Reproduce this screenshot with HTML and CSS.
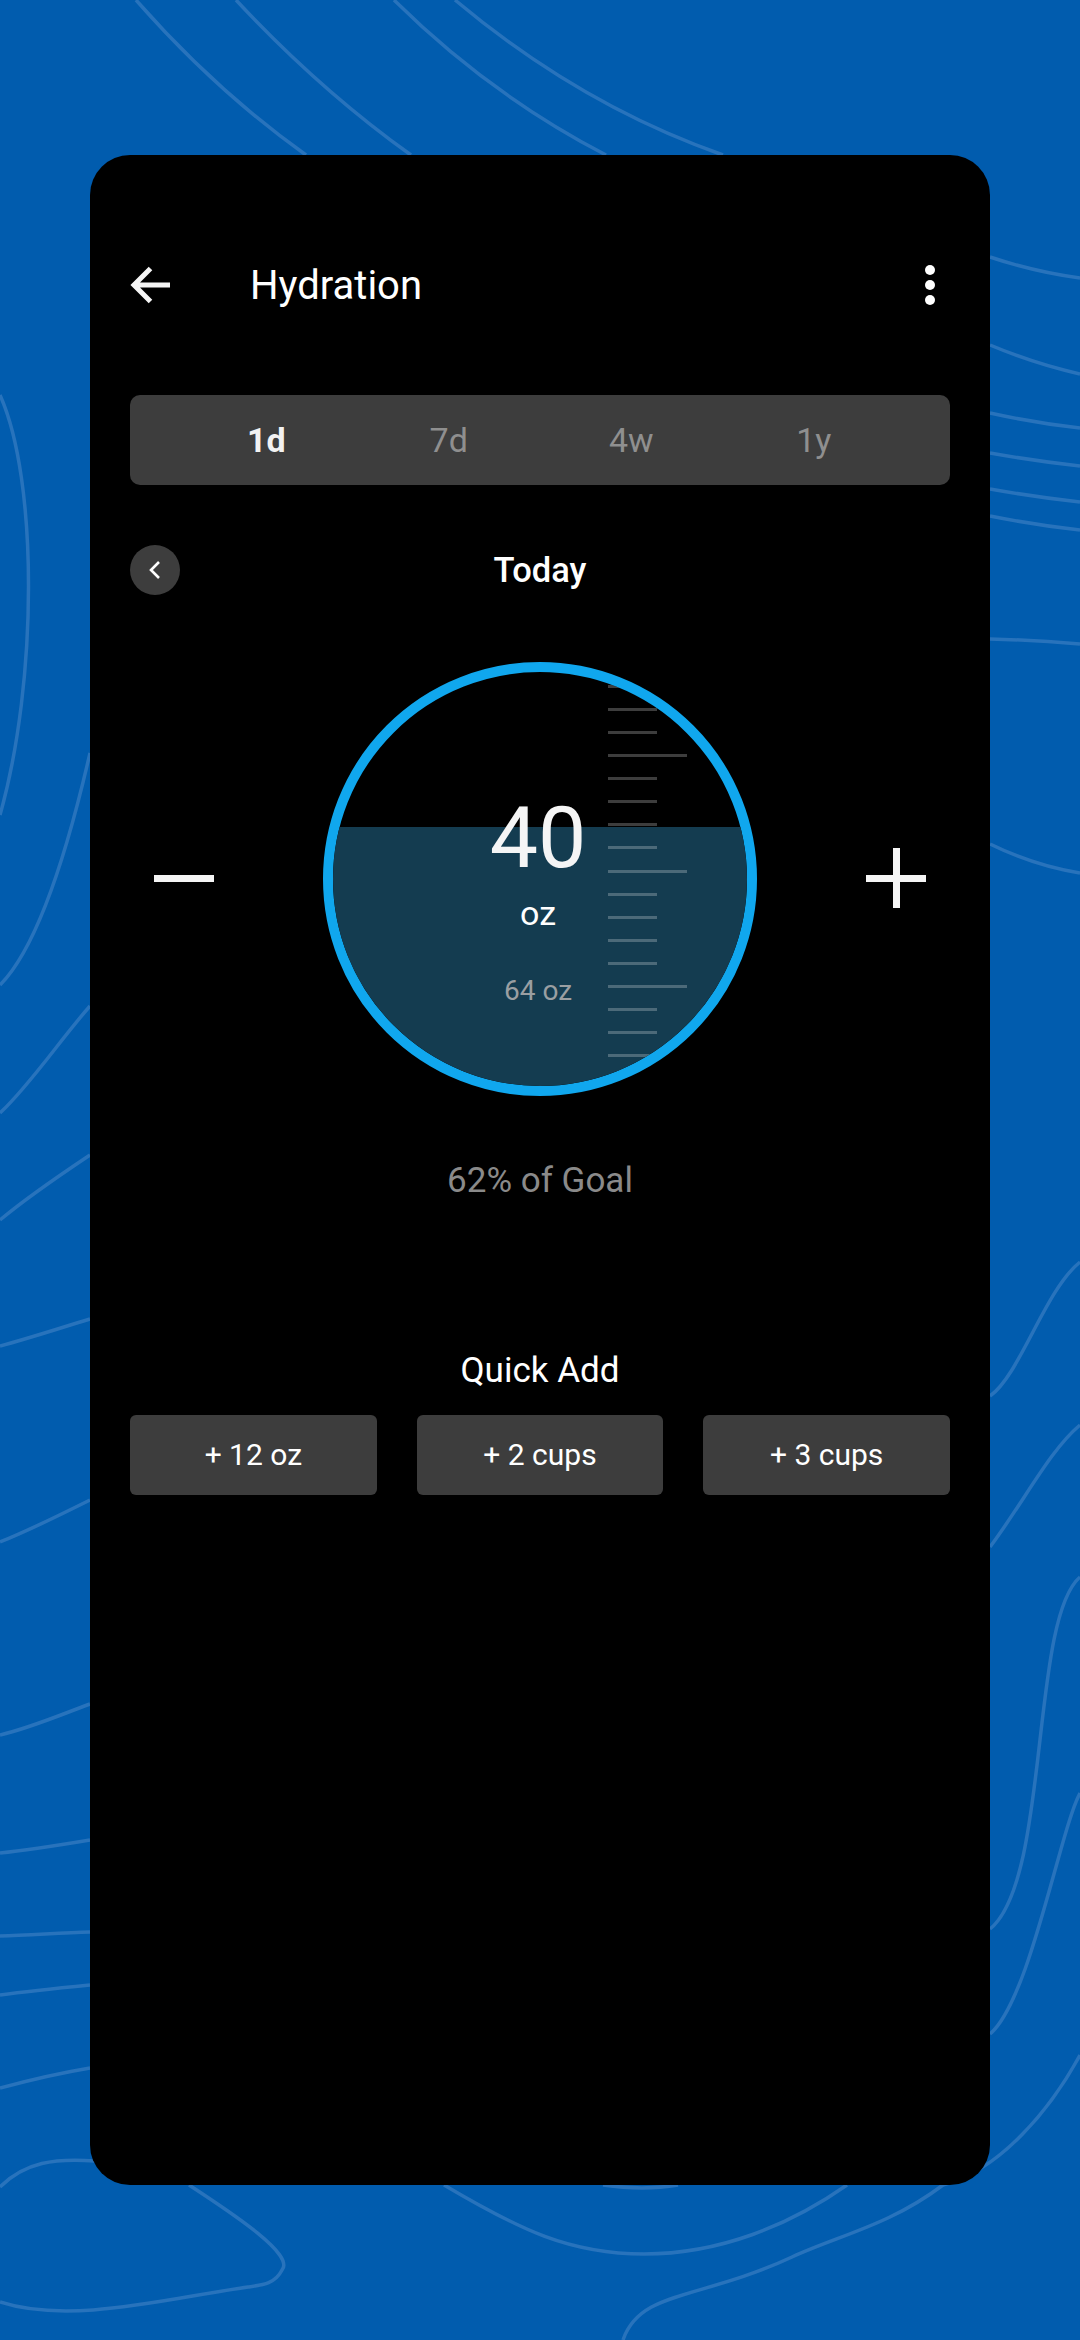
FILE: index.html
```html
<!DOCTYPE html>
<html lang="en">

<head>
    <meta charset="UTF-8">
    <meta name="viewport" content="width=device-width, initial-scale=1.0">
    <title>Hydration</title>
    <link rel="stylesheet" href="styles.css">
</head>

<body>
    <!-- Contour lines behind the card -->
    <svg class="contours" viewBox="0 0 1080 2340" fill="none">
        <path d="M136 0Q215 90 306 155" />
        <path d="M236 0Q320 90 411 155" />
        <path d="M394 0Q490 95 606 155" />
        <path d="M455 0Q580 105 723 155" />
        <path d="M990 257Q1035 272 1080 278" />
        <path d="M990 345Q1035 364 1080 374" />
        <path d="M990 413Q1035 423 1080 428" />
        <path d="M990 453Q1035 461 1080 466" />
        <path d="M990 489Q1035 497 1080 502" />
        <path d="M990 516Q1035 525 1080 530" />
        <path d="M990 639Q1035 640 1080 644" />
        <path d="M990 844Q1035 866 1080 873" />
        <path d="M990 1396C1020 1375 1045 1290 1080 1262" />
        <path d="M990 1547C1025 1500 1050 1450 1080 1425" />
        <path d="M990 1929C1050 1880 1030 1620 1080 1577" />
        <path d="M990 2034C1030 2000 1060 1830 1080 1793" />
        <path d="M1080 2055C1050 2110 1000 2170 943 2185C890 2225 840 2235 792 2257C700 2300 640 2290 623 2340" />
        <path d="M0 395C38 480 38 680 0 815" />
        <path d="M0 985C40 945 70 840 90 753" />
        <path d="M0 1113C30 1085 60 1040 90 1006" />
        <path d="M0 1220C30 1195 60 1175 90 1155" />
        <path d="M0 1346C30 1338 60 1328 90 1319" />
        <path d="M0 1542C30 1530 60 1515 90 1500" />
        <path d="M0 1735C30 1728 60 1715 90 1704" />
        <path d="M0 1853C30 1850 60 1845 90 1840" />
        <path d="M0 1936C30 1935 60 1933 90 1932" />
        <path d="M0 1995C30 1991 60 1988 90 1985" />
        <path d="M0 2088C30 2080 60 2073 90 2068" />
        <path d="M0 2187C25 2162 55 2158 95 2161" />
        <path d="M189 2185C235 2215 295 2255 282 2270C275 2284 262 2285 248 2287C170 2298 70 2325 0 2302" />
        <path d="M444 2185C520 2230 570 2254 644 2254C720 2254 790 2225 847 2185" />
        <path d="M603 2185C630 2189 655 2189 678 2185" />
    </svg>

    <div class="card">
        <header class="top-bar">
            <svg class="back-icon" viewBox="0 0 40 40" fill="none">
                <path d="M4 20H40M20.5 3.5L4 20L20.5 36.5" />
            </svg>
            <h1 class="title">Hydration</h1>
            <div class="more">
                <span></span>
                <span></span>
                <span></span>
            </div>
        </header>

        <nav class="tabs">
            <div class="tab active">1d</div>
            <div class="tab">7d</div>
            <div class="tab">4w</div>
            <div class="tab">1y</div>
        </nav>

        <div class="date-row">
            <div class="prev">
                <svg viewBox="0 0 14 20" fill="none">
                    <path d="M11 2L3 10L11 18" />
                </svg>
            </div>
            <div class="date">Today</div>
        </div>

        <div class="gauge-row">
            <div class="minus"></div>
            <div class="gauge">
                <div class="water"></div>
                <div class="ticks">
                    <i></i><i></i><i></i><i class="long"></i>
                    <i></i><i></i><i></i><i></i><i class="long"></i>
                    <i></i><i></i><i></i><i></i><i class="long"></i>
                    <i></i><i></i><i></i>
                </div>
                <div class="gauge-text">
                    <div class="amount">40</div>
                    <div class="unit">oz</div>
                    <div class="target">64 oz</div>
                </div>
            </div>
            <div class="plus"></div>
        </div>

        <p class="goal">62% of Goal</p>

        <h2 class="quick-title">Quick Add</h2>
        <div class="quick-add">
            <div class="quick-btn">+ 12 oz</div>
            <div class="quick-btn">+ 2 cups</div>
            <div class="quick-btn">+ 3 cups</div>
        </div>
    </div>
</body>

</html>
```

FILE: styles.css
```css
body {
    font-family: Roboto, Arial, sans-serif;
    margin: 0;
    height: 2340px;
    padding: 155px 90px 0;
    box-sizing: border-box;
    overflow: hidden;
    background-color: #015cae;
    color: #fff;
}

.contours {
    position: absolute;
    top: 0;
    left: 0;
    width: 1080px;
    height: 2340px;
}

.contours path {
    stroke: #2873bc;
    stroke-width: 3.5;
}

.card {
    position: relative;
    height: 2030px;
    padding: 80px 40px 0;
    box-sizing: border-box;
    border-radius: 40px;
    background-color: #000;
}

.top-bar {
    display: flex;
    align-items: center;
    height: 100px;
}

.back-icon {
    width: 40px;
    height: 40px;
}

.back-icon path {
    stroke: #f5f5f5;
    stroke-width: 5;
}

.title {
    flex: 1;
    margin: 0 0 0 80px;
    font-size: 40px;
    font-weight: 400;
}

.more {
    display: flex;
    flex-direction: column;
    gap: 5px;
    margin-right: 15px;
}

.more span {
    width: 10px;
    height: 10px;
    border-radius: 50%;
    background-color: #fff;
}

.tabs {
    display: grid;
    grid-template-columns: repeat(4, 1fr);
    align-items: center;
    height: 90px;
    margin-top: 60px;
    padding: 0 45px;
    border-radius: 10px;
    background-color: #3d3d3d;
}

.tab {
    text-align: center;
    font-size: 34px;
    color: #8f8f8f;
}

.tab.active {
    font-weight: 700;
    color: #f2f2f2;
}

.date-row {
    position: relative;
    display: flex;
    align-items: center;
    justify-content: center;
    height: 50px;
    margin-top: 60px;
}

.prev {
    position: absolute;
    left: 0;
    top: 0;
    display: flex;
    align-items: center;
    justify-content: center;
    width: 50px;
    height: 50px;
    border-radius: 50%;
    background-color: #3d3d3d;
}

.prev svg {
    width: 14px;
    height: 20px;
}

.prev path {
    stroke: #fff;
    stroke-width: 2.6;
}

.date {
    font-size: 34.5px;
    font-weight: 500;
}

.gauge-row {
    display: flex;
    align-items: center;
    justify-content: space-between;
    margin-top: 67px;
    padding: 0 24px;
}

.minus {
    width: 60px;
    height: 7px;
    margin-bottom: 2px;
    background-color: #f5f5f5;
}

.plus {
    position: relative;
    width: 60px;
    height: 60px;
    margin-bottom: 2px;
}

.plus::before,
.plus::after {
    content: "";
    position: absolute;
    background-color: #f5f5f5;
}

.plus::before {
    left: 0;
    right: 0;
    top: 27px;
    height: 7px;
}

.plus::after {
    top: 0;
    bottom: 0;
    left: 27px;
    width: 7px;
}

.gauge {
    position: relative;
    width: 434px;
    height: 434px;
    box-sizing: border-box;
    overflow: hidden;
    border: 10px solid #10a7ee;
    border-radius: 50%;
}

.water {
    position: absolute;
    left: 0;
    right: 0;
    bottom: 0;
    top: 155px;
    background-color: #143c50;
}

.ticks {
    position: absolute;
    left: 275px;
    top: 13px;
    display: flex;
    flex-direction: column;
    gap: 20.07px;
}

.ticks i {
    display: block;
    width: 49px;
    height: 3px;
    background-color: rgba(255, 255, 255, 0.24);
}

.ticks i.long {
    width: 79px;
}

.gauge-text {
    position: relative;
    display: flex;
    flex-direction: column;
    align-items: center;
    padding: 122px 4px 0 0;
}

.amount {
    font-size: 86px;
    line-height: 88px;
    color: #f5f5f5;
}

.unit {
    margin-top: 11px;
    font-size: 34px;
    line-height: 40px;
}

.target {
    margin-top: 42px;
    font-size: 28px;
    line-height: 32px;
    color: #9a9fa2;
}

.goal {
    margin: 65px 0 0;
    text-align: center;
    font-size: 35px;
    line-height: 40px;
    color: #8a8a8a;
}

.quick-title {
    margin: 150px 0 0;
    text-align: center;
    font-size: 35px;
    line-height: 40px;
    font-weight: 400;
}

.quick-add {
    display: grid;
    grid-template-columns: repeat(3, 1fr);
    gap: 40px;
    margin-top: 24px;
}

.quick-btn {
    height: 80px;
    line-height: 80px;
    text-align: center;
    font-size: 30px;
    border-radius: 6px;
    background-color: #3d3d3d;
}
```
